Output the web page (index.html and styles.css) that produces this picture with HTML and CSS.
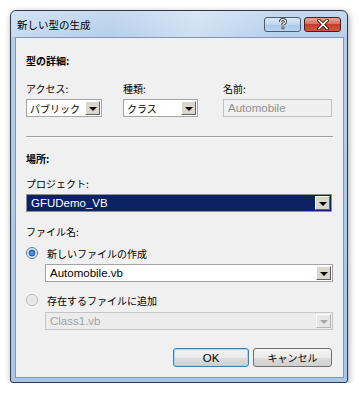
FILE: index.html
```html
<!DOCTYPE html>
<html lang="ja">
<head>
    <meta charset="UTF-8">
    <meta name="viewport" content="width=device-width, initial-scale=1.0">
    <title>新しい型の生成</title>
    <link rel="stylesheet" href="styles.css">
</head>
<body>
    <div class="window">
        <div class="titlebar">
            <span class="title">新しい型の生成</span>
            <div class="caption-buttons">
                <span class="cap-btn help-btn">
                    <svg width="12" height="12" viewBox="0 0 12 12">
                        <path d="M3.5 4 Q3.5 1.5 6 1.5 Q8.5 1.5 8.5 3.8 Q8.5 5.2 6 6.2 L6 7.6" fill="none" stroke="#3a3a3a" stroke-width="3"/>
                        <rect x="4.6" y="8.6" width="2.8" height="2.6" fill="#3a3a3a"/>
                        <path d="M3.5 4 Q3.5 1.5 6 1.5 Q8.5 1.5 8.5 3.8 Q8.5 5.2 6 6.2 L6 7.6" fill="none" stroke="#ffffff" stroke-width="1.2"/>
                        <rect x="5.4" y="9.3" width="1.2" height="1.2" fill="#ffffff"/>
                    </svg>
                </span>
                <span class="cap-btn close-btn">
                    <svg width="12" height="11" viewBox="0 0 12 11">
                        <path d="M2 1.5 L10 9.5 M10 1.5 L2 9.5" stroke="#4a1a14" stroke-width="3.6" stroke-linecap="square"/>
                        <path d="M2 1.5 L10 9.5 M10 1.5 L2 9.5" stroke="#ffffff" stroke-width="1.6" stroke-linecap="square"/>
                    </svg>
                </span>
            </div>
        </div>

        <div class="client">
            <div class="section-title">型の詳細:</div>

            <div class="detail-grid">
                <div class="field">
                    <div class="label">アクセス:</div>
                    <div class="combo access-combo">
                        <span class="combo-text jp">パブリック</span>
                        <span class="drop"><span class="arrow"></span></span>
                    </div>
                </div>
                <div class="field">
                    <div class="label">種類:</div>
                    <div class="combo kind-combo">
                        <span class="combo-text jp">クラス</span>
                        <span class="drop"><span class="arrow"></span></span>
                    </div>
                </div>
                <div class="field">
                    <div class="label">名前:</div>
                    <div class="textbox disabled">Automobile</div>
                </div>
            </div>

            <div class="separator"></div>

            <div class="section-title place-title">場所:</div>

            <div class="label project-label">プロジェクト:</div>
            <div class="combo project-combo selected">
                <span class="combo-text">GFUDemo_VB</span>
                <span class="drop"><span class="arrow"></span></span>
            </div>

            <div class="label file-label">ファイル名:</div>

            <label class="radio-row first-radio">
                <span class="radio checked"></span>
                <span>新しいファイルの作成</span>
            </label>
            <div class="combo file-combo">
                <span class="combo-text">Automobile.vb</span>
                <span class="drop"><span class="arrow"></span></span>
            </div>

            <label class="radio-row second-radio">
                <span class="radio"></span>
                <span>存在するファイルに追加</span>
            </label>
            <div class="combo file-combo existing-combo disabled">
                <span class="combo-text">Class1.vb</span>
                <span class="drop"><span class="arrow"></span></span>
            </div>

            <div class="button-row">
                <button class="dlg-btn ok-btn">OK</button>
                <button class="dlg-btn cancel-btn">キャンセル</button>
            </div>
        </div>
    </div>
</body>
</html>
```

FILE: styles.css
```css
body {
    margin: 0;
    background: #ffffff;
    font-family: "Noto Sans CJK JP", sans-serif;
    font-size: 10px;
    color: #000;
}
.window {
    margin: 10px 0 0 10px;
    width: 338px;
    height: 373px;
    box-sizing: border-box;
    border: 1px solid #2f3a46;
    border-radius: 6px 6px 3px 3px;
    background: linear-gradient(to bottom, #c4d9f0 0%, #b3cdea 8%, #a9c6e8 100%);
    box-shadow: 1px 2px 6px rgba(0, 0, 0, 0.35);
    display: flex;
    flex-direction: column;
}
.titlebar {
    height: 26px;
    display: flex;
    align-items: center;
    justify-content: space-between;
    padding: 0 6px 0 6px;
    background: linear-gradient(100deg, rgba(255,255,255,0.25) 0%, rgba(255,255,255,0) 30%, rgba(255,255,255,0.35) 55%, rgba(255,255,255,0) 80%);
    border-radius: 5px 5px 0 0;
}
.title {
    font-size: 10.5px;
    color: #000;
    padding-top: 1px;
}
.caption-buttons {
    display: flex;
    gap: 3px;
}
.cap-btn {
    width: 37px;
    height: 15px;
    box-sizing: border-box;
    border: 1px solid #4c5b6e;
    border-radius: 3px;
    display: flex;
    align-items: center;
    justify-content: center;
}
.help-btn {
    background: linear-gradient(to bottom, #d9e7f6 0%, #c0d6ef 50%, #a9c7e9 51%, #b9d4f0 100%);
}
.close-btn {
    border-color: #4a1d16;
    background: linear-gradient(to bottom, #e8a493 0%, #d27462 45%, #c2402c 50%, #d2553c 100%);
}
.client {
    flex: 1;
    margin: 0 3px 4px 4px;
    border: 1px solid #7f98b5;
    background: #f0f0f0;
    padding: 0 10px;
}
.section-title {
    font-weight: bold;
    line-height: 14px;
    margin-top: 16px;
}
.place-title {
    margin-top: 14px;
}
.label {
    line-height: 14px;
}
.detail-grid {
    display: grid;
    grid-template-columns: 97px 100px 109px;
    margin-top: 14px;
}
.field .combo,
.field .textbox {
    margin-top: 3px;
}
.combo {
    height: 18px;
    box-sizing: border-box;
    border: 1px solid #a4a4a4;
    background: #ffffff;
    display: flex;
    align-items: center;
    padding: 1px;
}
.combo-text {
    flex: 1;
    font-family: "Liberation Sans", sans-serif;
    font-size: 11.5px;
    padding-left: 3px;
    white-space: nowrap;
}
.combo-text.jp {
    font-family: "Noto Sans CJK JP", sans-serif;
    font-size: 10px;
    padding-left: 2px;
}
.drop {
    width: 15px;
    height: 14px;
    box-sizing: border-box;
    background: #d9d6d0;
    border: 1px solid;
    border-color: #ffffff #5f5f5f #5f5f5f #ffffff;
    display: flex;
    align-items: center;
    justify-content: center;
}
.arrow {
    width: 0;
    height: 0;
    border-left: 4px solid transparent;
    border-right: 4px solid transparent;
    border-top: 4px solid #000;
    margin-top: 1px;
}
.access-combo {
    width: 76px;
}
.kind-combo {
    width: 75px;
}
.textbox {
    width: 109px;
    height: 18px;
    box-sizing: border-box;
    border: 1px solid #c2c2c2;
    font-family: "Liberation Sans", sans-serif;
    font-size: 11.5px;
    line-height: 16px;
    padding-left: 4px;
}
.textbox.disabled {
    background: #efefef;
    color: #8f8f8f;
}
.separator {
    margin-top: 19px;
    border-top: 1px solid #a0a0a0;
    border-bottom: 1px solid #ffffff;
}
.project-label {
    margin-top: 11px;
}
.project-combo {
    margin-top: 3px;
    width: 306px;
    border-color: #8e8e8e;
}
.project-combo.selected {
    background: #0b2264;
}
.project-combo.selected .combo-text {
    color: #ffffff;
}
.file-label {
    margin-top: 13px;
}
.radio-row {
    display: flex;
    align-items: center;
    gap: 9px;
    height: 14px;
}
.first-radio {
    margin-top: 7px;
}
.second-radio {
    margin-top: 11px;
}
.radio {
    width: 12px;
    height: 12px;
    box-sizing: border-box;
    border-radius: 50%;
    border: 1px solid #9a9a9a;
    background: radial-gradient(circle, #e6e6e6 0%, #f6f6f6 60%, #ffffff 100%);
}
.radio.checked {
    border-color: #5b7fa8;
    background: radial-gradient(circle, #6fb3ee 0%, #2c6fbf 35%, #1d4f8e 45%, #dbe6f2 52%, #f4f7fb 100%);
}
.second-radio .radio {
    border-color: #b4b4b4;
    background: radial-gradient(circle, #dedede 0%, #ececec 50%, #f8f8f8 100%);
}
.file-combo {
    width: 288px;
    margin-left: 19px;
    margin-top: 4px;
}
.existing-combo {
    margin-top: 5px;
}
.combo.disabled {
    background: #ececec;
    border-color: #c6c6c6;
}
.combo.disabled .combo-text {
    color: #a2a2a2;
}
.combo.disabled .drop {
    background: #e6e6e6;
    border-color: #ffffff #b5b5b5 #b5b5b5 #ffffff;
}
.combo.disabled .arrow {
    border-top-color: #a6a6a6;
}
.button-row {
    display: flex;
    justify-content: flex-end;
    gap: 4px;
    margin-top: 18px;
    padding-right: 1px;
}
.dlg-btn {
    height: 19px;
    box-sizing: border-box;
    border: 1px solid #707070;
    border-radius: 3px;
    background: linear-gradient(to bottom, #f3f3f3 0%, #ebebeb 50%, #dddddd 51%, #cfcfcf 100%);
    padding: 0;
    color: #000;
    font-family: "Noto Sans CJK JP", sans-serif;
    font-size: 10px;
}
.ok-btn {
    width: 76px;
    border-color: #3c7fb1;
    box-shadow: inset 0 0 0 1px #9fdaf6;
    font-family: "Liberation Sans", sans-serif;
    font-size: 11.5px;
}
.cancel-btn {
    width: 79px;
}
```
